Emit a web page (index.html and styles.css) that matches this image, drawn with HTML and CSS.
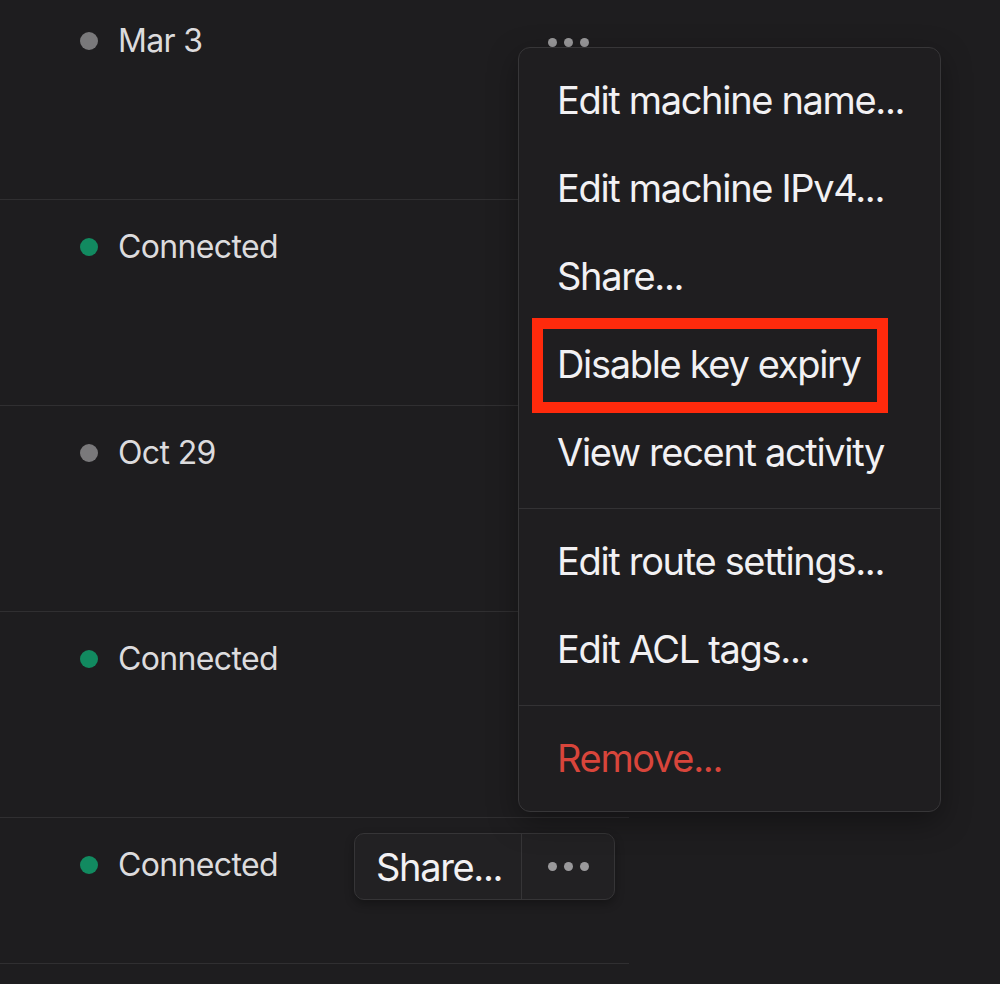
FILE: index.html
```html
<!DOCTYPE html>
<html lang="en">
<head>
    <meta charset="UTF-8">
    <meta name="viewport" content="width=device-width, initial-scale=1.0">
    <title>Machines</title>
    <link rel="stylesheet" href="styles.css">
</head>
<body>

<!-- Machine list -->
<div class="machineList">
    <div class="machineRow">
        <div class="statusCell">
            <span class="statusDot offline"></span>
            <span class="statusText">Mar 3</span>
        </div>
        <div class="actionCell">
            <div class="menuTrigger">
                <span class="dot"></span><span class="dot"></span><span class="dot"></span>
            </div>
        </div>
    </div>

    <div class="machineRow">
        <div class="statusCell">
            <span class="statusDot online"></span>
            <span class="statusText">Connected</span>
        </div>
    </div>

    <div class="machineRow">
        <div class="statusCell">
            <span class="statusDot offline"></span>
            <span class="statusText">Oct 29</span>
        </div>
    </div>

    <div class="machineRow">
        <div class="statusCell">
            <span class="statusDot online"></span>
            <span class="statusText">Connected</span>
        </div>
    </div>

    <div class="machineRow lastRow">
        <div class="statusCell">
            <span class="statusDot online"></span>
            <span class="statusText">Connected</span>
        </div>
        <div class="actionCell">
            <div class="buttonGroup">
                <button class="groupButton shareButton">Share...</button>
                <button class="groupButton moreButton">
                    <span class="dot"></span><span class="dot"></span><span class="dot"></span>
                </button>
            </div>
        </div>
    </div>
</div>

<!-- Dropdown menu -->
<div class="dropdownMenu">
    <div class="menuGroup">
        <div class="menuItem">Edit machine name...</div>
        <div class="menuItem">Edit machine IPv4...</div>
        <div class="menuItem">Share...</div>
        <div class="menuItem highlighted">Disable key expiry</div>
        <div class="menuItem">View recent activity</div>
    </div>
    <div class="menuGroup">
        <div class="menuItem">Edit route settings...</div>
        <div class="menuItem">Edit ACL tags...</div>
    </div>
    <div class="menuGroup">
        <div class="menuItem danger">Remove...</div>
    </div>
</div>

</body>
</html>
```

FILE: styles.css
```css
body, html {
    margin: 0;
    padding: 0;
    height: 100%;
    background-color: #1e1d1f;
    color: #dedddf;
    font-family: Inter, "Noto Sans", sans-serif;
    overflow: hidden;
}

/* List of machines */
.machineList {
    width: 629px;
    margin-top: -6px;
}

.machineRow {
    display: flex;
    height: 205px;
    border-bottom: 1px solid #302f31;
    box-sizing: content-box;
}

.lastRow {
    height: 145px;
}

/* Status column */
.statusCell {
    flex: 1;
    display: flex;
    align-items: center;
    gap: 20px;
    height: 40px;
    padding-left: 80px;
    padding-top: 27px;
}

.statusDot {
    width: 18px;
    height: 18px;
    border-radius: 50%;
    flex-shrink: 0;
}

.statusDot.offline {
    background-color: #7a797b;
}

.statusDot.online {
    background-color: #128a60;
}

.statusText {
    font-size: 32px;
    line-height: 40px;
    letter-spacing: -0.02em;
    color: #dcdbdd;
}

/* Actions column */
.actionCell {
    padding-top: 15px;
    padding-right: 14px;
}

.dot {
    display: inline-block;
    width: 9px;
    height: 9px;
    border-radius: 50%;
    background-color: #9a999b;
}

.menuTrigger {
    display: flex;
    align-items: center;
    justify-content: center;
    gap: 7px;
    width: 93px;
    height: 67px;
}

.buttonGroup {
    display: flex;
    height: 65px;
    border: 1px solid #363537;
    border-radius: 10px;
    background-color: #222123;
    box-shadow: 0 4px 10px rgba(0, 0, 0, 0.3);
    overflow: hidden;
}

.groupButton {
    background: none;
    border: none;
    margin: 0;
    padding: 0;
    font-family: Inter, "Noto Sans", sans-serif;
    color: #f2f1f3;
    cursor: pointer;
}

.shareButton {
    width: 167px;
    padding-left: 21px;
    text-align: left;
    font-size: 38px;
    letter-spacing: -0.035em;
    border-right: 1px solid #363537;
}

.moreButton {
    display: flex;
    align-items: center;
    justify-content: center;
    gap: 7px;
    width: 92px;
}

/* Open dropdown */
.dropdownMenu {
    position: absolute;
    left: 518px;
    top: 47px;
    width: 421px;
    height: 763px;
    border: 1px solid #373638;
    border-radius: 12px;
    background-color: #1f1e20;
    box-shadow: 0 10px 30px rgba(0, 0, 0, 0.35);
}

.menuGroup {
    padding: 10px 0;
    border-bottom: 1px solid #333234;
}

.menuGroup:last-child {
    border-bottom: none;
}

.menuItem {
    position: relative;
    height: 88px;
    line-height: 85px;
    padding-left: 38px;
    font-size: 38px;
    letter-spacing: -0.035em;
    color: #f2f1f3;
    white-space: nowrap;
}

.menuItem.danger {
    color: #d8453b;
}

/* Red annotation box */
.menuItem.highlighted::after {
    content: "";
    position: absolute;
    left: 13px;
    top: -4px;
    width: 356px;
    height: 95px;
    border: 11px solid #ff2a0c;
    box-sizing: border-box;
}
```
